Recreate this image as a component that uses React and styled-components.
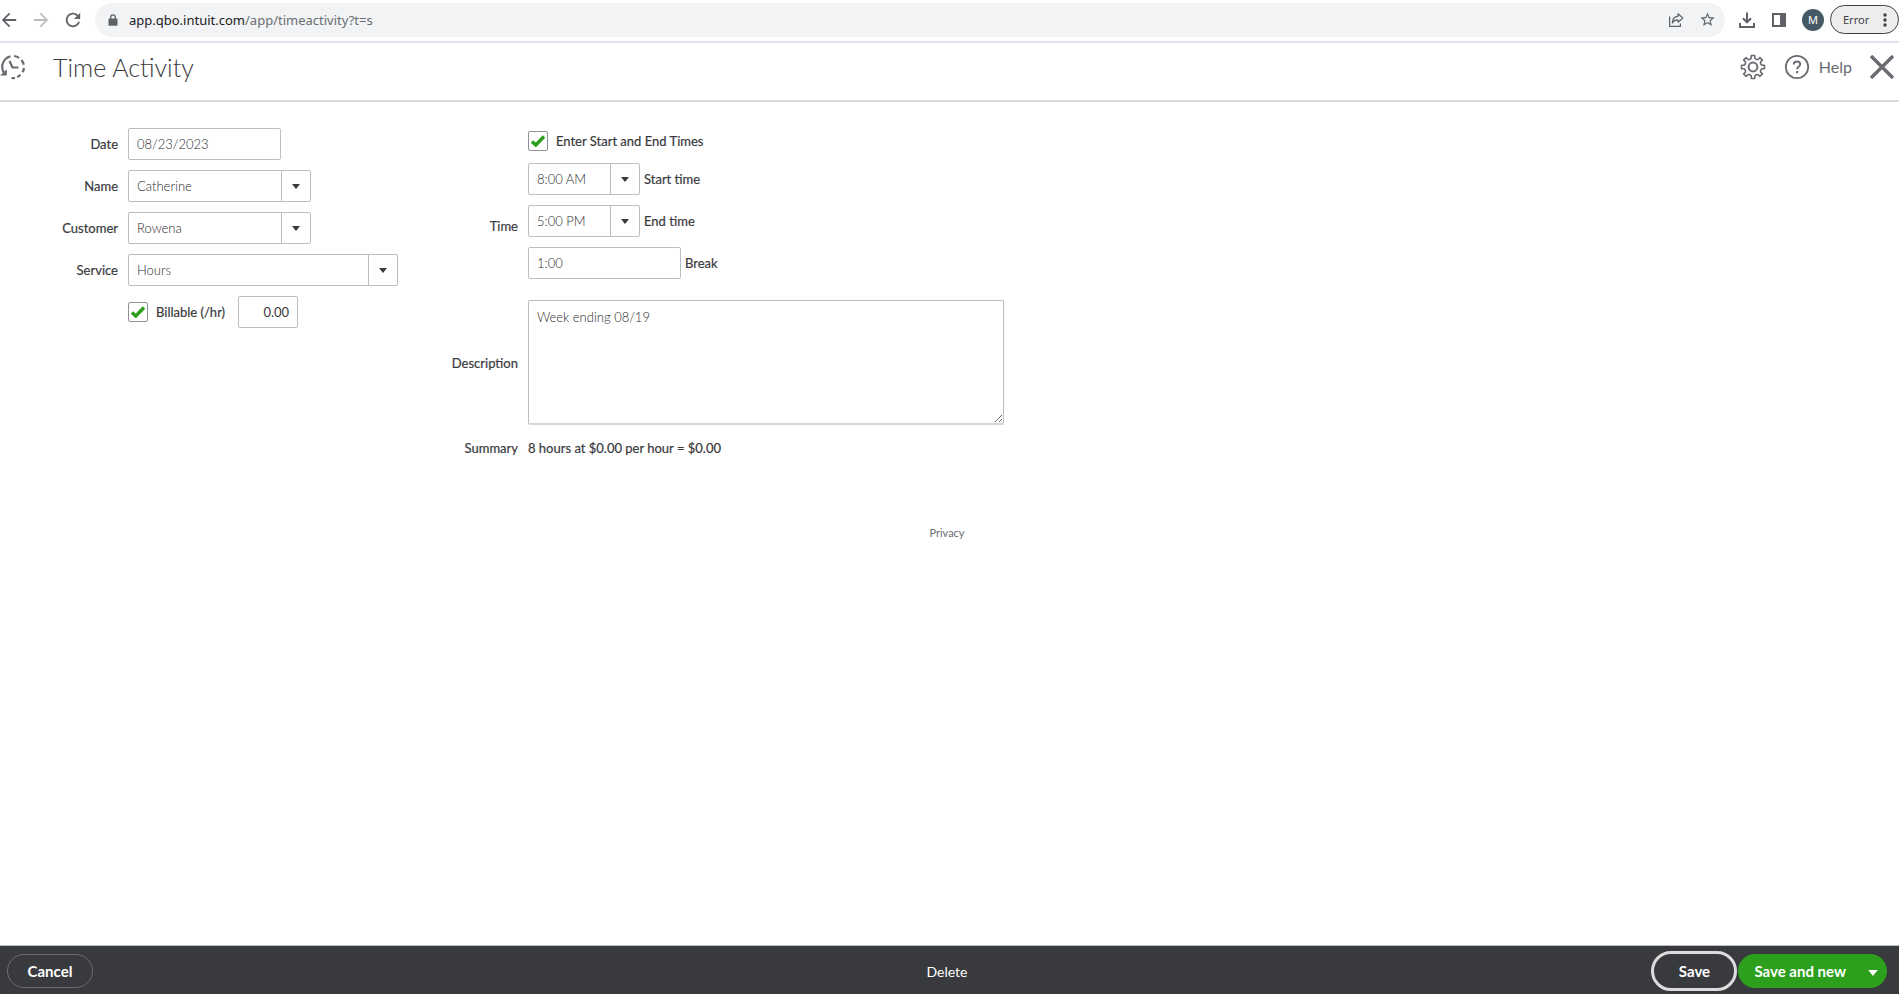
import React from "react";
import styled, { createGlobalStyle } from "styled-components";

const sans = `Lato, "Open Sans", sans-serif`;
const ui = `"Noto Sans", "Open Sans", sans-serif`;

const GlobalStyle = createGlobalStyle`
  *, *::before, *::after { box-sizing: border-box; }
  body { margin: 0; background: #fff; color: #393a3d; font-family: ${sans}; }
  button, input, select, textarea { font: inherit; color: inherit; margin: 0; }
`;

const Page = styled.div`
  min-height: 100vh;
  display: flex;
  flex-direction: column;
`;

/* Browser toolbar */
const Toolbar = styled.div`
  display: flex;
  align-items: center;
  height: 43px;
  padding: 0 0 2px;
  border-bottom: 2px solid #dee2ec;
  color: #5f6368;
  font-family: ${ui};
`;
const NavButtons = styled.div`
  display: flex;
  gap: 14px;
  width: 95px;
`;
const IconButton = styled.button`
  display: flex;
  align-items: center;
  justify-content: center;
  padding: 0;
  border: 0;
  background: none;
  color: ${(p) => (p.$faded ? "#bbbdbf" : "#5f6368")};
`;
const AddressBar = styled.div`
  flex: 1;
  display: flex;
  align-items: center;
  height: 34px;
  padding: 0 9px 0 13px;
  border-radius: 17px;
  background: #f1f3f4;
`;
const Url = styled.div`
  flex: 1;
  margin-left: 11px;
  font-size: 13px;
  line-height: 20px;
  color: #6a6e73;
  b { font-weight: 400; color: #202124; }
`;
const AddressActions = styled.div`
  display: flex;
  gap: 15px;
`;
const BrowserActions = styled.div`
  display: flex;
  align-items: center;
  gap: 14px;
  padding-left: 13px;
`;
const Avatar = styled.button`
  width: 22px;
  height: 22px;
  padding: 0;
  border: 0;
  border-radius: 50%;
  background: #455a64;
  color: #fff !important;
  font-size: 11px !important;
  line-height: 22px;
`;
const ErrorButton = styled.button`
  display: flex;
  align-items: center;
  justify-content: space-between;
  width: 69px;
  height: 29px;
  padding: 0 11px 0 12px;
  border: 1px solid #3c4043;
  border-radius: 15px;
  background: #ededed;
  color: #3c4043 !important;
  font-size: 11px !important;
`;
const ErrorSlot = styled.div`
  padding-left: 6px;
`;

/* Page header */
const Header = styled.header`
  display: flex;
  align-items: center;
  height: 59px;
  padding: 0 5px 10px 0;
  border-bottom: 2px solid #d4d7dc;
  color: #6b6c72;
`;
const Title = styled.h1`
  flex: 1;
  margin: 0 0 0 27px;
  font-size: 25px;
  line-height: 32px;
  font-weight: 300;
  color: #393a3d;
`;
const HeaderActions = styled.div`
  display: flex;
  align-items: center;
  gap: 18px;
`;
const HelpButton = styled(IconButton)`
  gap: 9px;
  font-size: 16px;
  line-height: 20px;
  color: #6b6c72;
`;

/* Form */
const Main = styled.main`
  flex: 1;
  display: flex;
  flex-direction: column;
`;
const Form = styled.form`
  display: flex;
  align-items: flex-start;
  padding-top: 26px;
  font-size: 13px;
  line-height: 18px;
`;
const Fields = styled.div`
  display: grid;
  grid-template-columns: ${(p) => p.$labels} auto;
  column-gap: 10px;
  row-gap: 10px;
  align-items: center;
`;
const Label = styled.label`
  text-align: right;
  -webkit-text-stroke: 0.2px;
`;
const Field = styled.div`
  display: flex;
  align-items: center;
  grid-column: 2;
`;
const TextInput = styled.input`
  width: ${(p) => p.$width || "153px"};
  height: 32px;
  padding: 0 8px;
  border: 1px solid #babec5;
  border-radius: 2px;
  background: #fff;
  && {
    color: #2b2c2f;
    font-weight: 300;
  }
  text-align: ${(p) => p.$align || "left"};
  outline: 0;
`;
const AmountInput = styled(TextInput)`
  margin-left: 13px;
  &&& {
    color: #393a3d;
    font-weight: 400;
  }
`;
const SelectBox = styled.div`
  display: grid;
  grid-template-columns: 1fr 29px;
  width: ${(p) => p.$width};
  height: 32px;
  border: 1px solid #babec5;
  border-radius: 2px;
  svg {
    grid-area: 1 / 2;
    place-self: center;
    pointer-events: none;
  }
`;
const Select = styled.select`
  grid-area: 1 / 1 / 2 / 3;
  appearance: none;
  padding: 0 8px;
  border: 0;
  background: linear-gradient(#babec5, #babec5) right 28px top / 1px 100% no-repeat;
  && {
    color: #2b2c2f;
    font-weight: 300;
  }
  outline: 0;
`;
const CheckBox = styled.span`
  display: grid;
  width: 20px;
  height: 20px;
  margin-right: 8px;
  svg, input { grid-area: 1 / 1; }
  svg { place-self: center; pointer-events: none; z-index: 1; }
  input {
    appearance: none;
    width: 20px;
    height: 20px;
    border: 1px solid #8d9096;
    border-radius: 2px;
    background: #fff;
  }
  input:not(:checked) + svg { display: none; }
`;
const TimeGroup = styled.div`
  display: flex;
  flex-direction: column;
  gap: 10px;
  padding-bottom: 11px;
`;
const CheckRow = styled.div`
  display: flex;
  align-items: center;
  height: 25px;
`;
const SideLabel = styled(Label)`
  margin-left: 4px;
`;
const GroupLabel = styled(Label).attrs({ as: "span" })`
  padding-top: 34px;
`;
const Description = styled.textarea`
  display: block;
  width: 476px;
  height: 125px;
  padding: 7px 8px;
  border: 1px solid #babec5;
  border-bottom: 2px solid #d4d7dc;
  border-radius: 2px;
  && {
    color: #2b2c2f;
    font-weight: 300;
  }
  outline: 0;
`;
const Summary = styled.output`
  padding: 4px 0;
  -webkit-text-stroke: 0.2px;
`;
const Privacy = styled.a`
  align-self: center;
  margin: 64px 5px 0 0;
  font-size: 11px;
  line-height: 16px;
  color: #6b6c72;
  text-decoration: none;
`;

/* Bottom bar */
const Footer = styled.footer`
  display: grid;
  grid-template-columns: 1fr auto 1fr;
  align-items: center;
  height: 49px;
  padding: 2px 12px 0 7px;
  border-top: 1px solid #babec5;
  background: #393a3d;
  color: #fff;
  font-size: 14px;
`;
const Pill = styled.button`
  width: 86px;
  height: 34px;
  padding: 0;
  border: 1px solid #6b6c72;
  border-radius: 17px;
  background: none;
  && {
    font-size: 15px;
    font-weight: 700;
  }
`;
const PlainButton = styled.button`
  padding: 0;
  border: 0;
  background: none;
`;
const SaveActions = styled.div`
  display: flex;
  align-items: center;
  justify-self: end;
  gap: 1px;
`;
const SaveButton = styled(Pill)`
  height: 40px;
  border: 3px solid #dcdcdc;
  border-radius: 20px;
`;
const SplitButton = styled.div`
  display: flex;
  align-items: center;
  height: 34px;
  border-radius: 17px;
  background: #2ca01c;
`;
const SplitMain = styled(PlainButton)`
  padding: 0 13px 0 16px;
  && {
    font-size: 15px;
    font-weight: 700;
  }
`;
const SplitArrow = styled(PlainButton)`
  display: flex;
  padding: 3px 9px 0;
`;

const Glyph = ({ size = 18, box = "0 0 24 24", children }) => (
  <svg width={size} height={size} viewBox={box} fill="currentColor" aria-hidden="true">
    {children}
  </svg>
);

const Caret = ({ width = 8, height = 5 }) => (
  <svg width={width} height={height} viewBox="0 0 8 5" fill="currentColor" aria-hidden="true">
    <path d="M0 0h8L4 5z" />
  </svg>
);

const gearPath = (() => {
  const pts = [];
  const teeth = 8;
  for (let i = 0; i < teeth; i++) {
    [[-0.19, 11.6], [0.19, 11.6], [0.25, 9], [0.5, 8.3], [0.75, 9]].forEach(([o, r]) => {
      const a = ((i + o) / teeth) * Math.PI * 2 - Math.PI / 2;
      pts.push(`${(12 + r * Math.cos(a)).toFixed(2)} ${(12 + r * Math.sin(a)).toFixed(2)}`);
    });
  }
  return `M${pts.join("L")}Z`;
})();

const Check = ({ id, children }) => (
  <>
    <CheckBox>
      <input type="checkbox" id={id} defaultChecked />
      <svg width="14" height="12" viewBox="0 0 14 12" fill="none" stroke="#2ca01c" strokeWidth="3.400">
        <path d="M1 6.5 4.800 10 13 1.500" />
      </svg>
    </CheckBox>
    <Label htmlFor={id}>{children}</Label>
  </>
);

const Dropdown = ({ id, value, width }) => (
  <SelectBox $width={width}>
    <Select id={id} defaultValue={value}>
      <option>{value}</option>
    </Select>
    <Caret />
  </SelectBox>
);

export default function App() {
  return (
    <Page>
      <GlobalStyle />
      <Toolbar>
        <NavButtons>
          <IconButton aria-label="Back">
            <Glyph box="2 2 20 20"><path d="M20 11H7.830l5.590-5.590L12 4l-8 8 8 8 1.410-1.410L7.830 13H20v-2z" /></Glyph>
          </IconButton>
          <IconButton aria-label="Forward" $faded>
            <Glyph box="2 2 20 20"><path d="M12 4l-1.410 1.410L16.170 11H4v2h12.170l-5.580 5.590L12 20l8-8z" /></Glyph>
          </IconButton>
          <IconButton aria-label="Reload">
            <Glyph box="2 2 20 20"><path d="M17.650 6.350C16.200 4.900 14.210 4 12 4c-4.420 0-7.990 3.580-7.990 8s3.570 8 7.990 8c3.730 0 6.840-2.550 7.730-6h-2.080c-.82 2.330-3.040 4-5.650 4-3.310 0-6-2.690-6-6s2.690-6 6-6c1.660 0 3.140.69 4.220 1.780L13 11h7V4l-2.350 2.350z" /></Glyph>
          </IconButton>
        </NavButtons>
        <AddressBar>
          <svg width="10" height="12" viewBox="0 0 10 12" fill="currentColor" aria-hidden="true">
            <path d="M1 4.500h8q.5 0 .5.5v6q0 .8-.8.8H1.300q-.8 0-.8-.8V5q0-.5.5-.5z" />
            <path d="M2.700 5V3.200a2.300 2.300 0 0 1 4.600 0V5" fill="none" stroke="currentColor" strokeWidth="1.300" />
          </svg>
          <Url><b>app.qbo.intuit.com</b>/app/timeactivity?t=s</Url>
          <AddressActions>
            <IconButton aria-label="Share">
              <svg width="16" height="16" viewBox="0 0 16 16" fill="none" stroke="currentColor" strokeWidth="1.200" strokeLinejoin="round">
                <path d="M1.600 4.500v9.900h10.800v-3" />
                <path d="M10 1.800 14.800 6 10 10.200V7.900C7.500 7.800 5.600 8.700 4.300 11c.2-3.600 2.200-6.300 5.700-6.800z" />
              </svg>
            </IconButton>
            <IconButton aria-label="Bookmark">
              <Glyph size={17}><path d="M22 9.240l-7.190-.62L12 2 9.190 8.630 2 9.240l5.460 4.730L5.820 21 12 17.270 18.180 21l-1.630-7.030L22 9.240zM12 15.400l-3.760 2.270 1-4.280-3.320-2.880 4.380-.38L12 6.100l1.710 4.040 4.380.38-3.320 2.880 1 4.280L12 15.400z" /></Glyph>
            </IconButton>
          </AddressActions>
        </AddressBar>
        <BrowserActions>
          <IconButton aria-label="Downloads">
            <Glyph box="0 0 18 18">
              <path d="M9 1.500v9.500M5 7.300l4 4 4-4M2 12v4h14v-4" fill="none" stroke="currentColor" strokeWidth="2" />
            </Glyph>
          </IconButton>
          <IconButton aria-label="Side panel">
            <Glyph box="0 0 18 18"><path fillRule="evenodd" d="M2 2h14v14H2zM4 4v10h6V4z" /></Glyph>
          </IconButton>
          <Avatar>M</Avatar>
        </BrowserActions>
        <ErrorSlot>
          <ErrorButton>
            Error
            <svg width="4" height="14" viewBox="0 0 4 14" fill="currentColor" aria-hidden="true">
              <circle cx="2" cy="2" r="1.700" /><circle cx="2" cy="7" r="1.700" /><circle cx="2" cy="12" r="1.700" />
            </svg>
          </ErrorButton>
        </ErrorSlot>
      </Toolbar>

      <Header>
        <svg width="26" height="26" viewBox="0 0 26 26" fill="none" stroke="currentColor" strokeWidth="2.200" aria-hidden="true">
          <path d="M10.500 2.200A11 11 0 0 0 4.500 19.500" />
          <path d="M0 21.500 6.800 15.300V21.500z" fill="currentColor" stroke="none" />
          <path d="M14 2a11 11 0 0 1 5.200 1.900M21.500 6a11 11 0 0 1 2.200 4.800M24 14a11 11 0 0 1-1.500 4.300M20.500 20.700a11 11 0 0 1-3.300 2.300M15 24a11 11 0 0 1-3.500 0" />
          <path d="M9.500 7 12.500 13.500H18.500" />
        </svg>
        <Title>Time Activity</Title>
        <HeaderActions>
          <IconButton aria-label="Settings">
            <svg width="26" height="26" viewBox="-1 -1 26 26" fill="none" stroke="#6b6c72" strokeWidth="1.600" strokeLinejoin="round">
              <path d={gearPath} /><circle cx="12" cy="12" r="4.400" strokeWidth="2" />
            </svg>
          </IconButton>
          <HelpButton>
            <svg width="26" height="26" viewBox="0 0 26 26" fill="none" stroke="currentColor" aria-hidden="true">
              <circle cx="13" cy="13" r="11.200" strokeWidth="1.800" />
              <path d="M9.800 10.500c0-4 6.400-4 6.400-.3 0 2.300-3.100 2.300-3.100 5M13.100 17v2.200" strokeWidth="2" />
            </svg>
            Help
          </HelpButton>
          <IconButton aria-label="Close">
            <svg width="24" height="24" viewBox="0 0 24 24" fill="none" stroke="#6b6c72" strokeWidth="3.400">
              <path d="M1 1l22 22M23 1L1 23" />
            </svg>
          </IconButton>
        </HeaderActions>
      </Header>

      <Main>
        <Form>
          <Fields $labels="118px">
            <Label htmlFor="date">Date</Label>
            <Field><TextInput id="date" defaultValue="08/23/2023" /></Field>
            <Label htmlFor="name">Name</Label>
            <Field><Dropdown id="name" value="Catherine" width="183px" /></Field>
            <Label htmlFor="customer">Customer</Label>
            <Field><Dropdown id="customer" value="Rowena" width="183px" /></Field>
            <Label htmlFor="service">Service</Label>
            <Field><Dropdown id="service" value="Hours" width="270px" /></Field>
            <Field>
              <Check id="billable">Billable (/hr)</Check>
              <AmountInput $width="60px" $align="right" aria-label="Rate per hour" defaultValue="0.00" />
            </Field>
          </Fields>
          <Fields $labels="120px">
            <GroupLabel id="time">Time</GroupLabel>
            <TimeGroup role="group" aria-labelledby="time">
              <CheckRow><Check id="start-end">Enter Start and End Times</Check></CheckRow>
              <Field>
                <Dropdown id="start" value="8:00 AM" width="112px" />
                <SideLabel htmlFor="start">Start time</SideLabel>
              </Field>
              <Field>
                <Dropdown id="end" value="5:00 PM" width="112px" />
                <SideLabel htmlFor="end">End time</SideLabel>
              </Field>
              <Field>
                <TextInput id="break" defaultValue="1:00" />
                <SideLabel htmlFor="break">Break</SideLabel>
              </Field>
            </TimeGroup>
            <Label htmlFor="description">Description</Label>
            <Description id="description" defaultValue="Week ending 08/19" />
            <Label htmlFor="summary">Summary</Label>
            <Summary id="summary">8 hours at $0.00 per hour = $0.00</Summary>
          </Fields>
        </Form>
        <Privacy href="#privacy">Privacy</Privacy>
      </Main>

      <Footer>
        <div><Pill>Cancel</Pill></div>
        <PlainButton>Delete</PlainButton>
        <SaveActions>
          <SaveButton>Save</SaveButton>
          <SplitButton>
            <SplitMain>Save and new</SplitMain>
            <SplitArrow aria-label="More save options"><Caret width={10} height={6} /></SplitArrow>
          </SplitButton>
        </SaveActions>
      </Footer>
    </Page>
  );
}
